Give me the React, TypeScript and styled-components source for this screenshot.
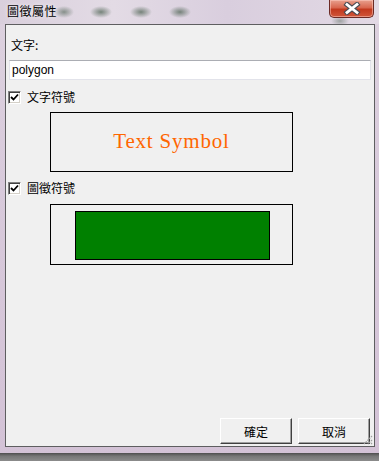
import React, { useState } from 'react';
import styled, { createGlobalStyle } from 'styled-components';

const GlobalStyle = createGlobalStyle`
  html, body {
    margin: 0;
    padding: 0;
    width: 379px;
    height: 461px;
    overflow: hidden;
    background: #6a6a6a;
  }
`;

const cjk = `"Noto Sans CJK TC", "Noto Sans CJK SC", "Liberation Sans", sans-serif`;

// Window frame
const Window = styled.div`
  width: 379px;
  height: 461px;
  display: flex;
  flex-direction: column;
  background: linear-gradient(180deg, #ddd2df 0%, #d8cadb 40%, #d3c2d6 100%);
  font-family: ${cjk};
  color: #000;
`;

const TitleBar = styled.div`
  height: 24px;
  flex: none;
  display: flex;
  justify-content: space-between;
  align-items: flex-start;
  padding-left: 7px;
  background:
    radial-gradient(ellipse 10px 6px at 64px 12px, rgba(60, 85, 65, 0.55), transparent),
    radial-gradient(ellipse 11px 6px at 101px 12px, rgba(60, 85, 65, 0.65), transparent),
    radial-gradient(ellipse 11px 6px at 141px 12px, rgba(60, 85, 65, 0.65), transparent),
    radial-gradient(ellipse 11px 6px at 180px 12px, rgba(60, 85, 65, 0.65), transparent),
    radial-gradient(ellipse 9px 5px at 340px 21px, rgba(60, 85, 65, 0.4), transparent),
    linear-gradient(90deg, #d9cfdc 0%, #e3dbe5 30%, #d9cede 60%, #e2d9e4 100%);
`;

const Title = styled.span`
  margin-top: 4px;
  font-size: 12px;
  line-height: 14px;
  letter-spacing: 0.5px;
  text-shadow: 0 0 4px rgba(255, 255, 255, 0.9);
`;

const CloseButton = styled.div`
  width: 45px;
  height: 18px;
  margin-right: 5px;
  box-sizing: border-box;
  display: flex;
  align-items: center;
  justify-content: center;
  border: 1px solid #6b2a25;
  border-top: none;
  border-radius: 0 0 5px 5px;
  background: linear-gradient(180deg, #e8a08e 0%, #d8674f 45%, #c2391e 55%, #d0563a 100%);
  box-shadow: inset 0 0 0 1px rgba(255, 210, 200, 0.5);
`;

const Body = styled.div`
  flex: 1;
  display: flex;
  padding: 0 4px 0 5px;
`;

const Client = styled.div`
  position: relative;
  flex: 1;
  display: flex;
  flex-direction: column;
  border: 1px solid #5e5e60;
  background: #f0f0f0;
  padding: 0 3px 2px 3px;
`;

const BottomFrame = styled.div`
  height: 6px;
  flex: none;
`;

const Shadow = styled.div`
  height: 8px;
  flex: none;
  background: linear-gradient(180deg, #4e4e4e 0%, #777 40%, #8c8c8c 100%);
`;

// Form parts
const FieldLabel = styled.div`
  margin-top: 13px;
  margin-left: 2px;
  font-size: 12px;
  line-height: 14px;
`;

const TextInput = styled.input`
  margin-top: 8px;
  height: 20px;
  box-sizing: border-box;
  width: 362px;
  border: 1px solid #e2e3ea;
  border-top-color: #abadb3;
  background: #fff;
  padding: 0 2px;
  font-family: "Liberation Sans", Arial, sans-serif;
  font-size: 12px;
  color: #000;
  outline: none;
`;

const CheckRow = styled.label<{ $top: number }>`
  margin-top: ${p => p.$top}px;
  display: flex;
  align-items: center;
  gap: 6px;
  height: 14px;
  margin-left: -1px;
  font-size: 12px;
  line-height: 14px;
  cursor: default;
`;

const CheckBox = styled.span`
  width: 13px;
  height: 13px;
  box-sizing: border-box;
  display: flex;
  align-items: center;
  justify-content: center;
  background: #fff;
  border: 1px solid;
  border-color: #808080 #ffffff #ffffff #808080;
  box-shadow: inset 1px 1px 0 #404040, inset -1px -1px 0 #d4d0c8;
`;

const PreviewBox = styled.div<{ $top: number; $height: number }>`
  margin-top: ${p => p.$top}px;
  margin-left: 41px;
  width: 243px;
  height: ${p => p.$height}px;
  box-sizing: border-box;
  border: 1px solid #000;
  display: flex;
  align-items: center;
  justify-content: center;
`;

const SymbolText = styled.span`
  font-family: "Liberation Serif", "Times New Roman", serif;
  font-size: 21px;
  letter-spacing: 0.8px;
  color: #ff6600;
  white-space: nowrap;
  margin-top: -1px;
`;

const IconRect = styled.div`
  width: 195px;
  height: 49px;
  box-sizing: border-box;
  border: 1px solid #000;
  background: #008000;
  margin-left: 1px;
  margin-top: 1px;
`;

const Spacer = styled.div`
  flex: 1;
`;

const ButtonRow = styled.div`
  display: flex;
  justify-content: flex-end;
  gap: 6px;
  padding-right: 1px;
`;

const Button = styled.button`
  width: 72px;
  height: 26px;
  box-sizing: border-box;
  background: #f0f0f0;
  border: 1px solid;
  border-color: #ffffff #404040 #404040 #ffffff;
  box-shadow: inset -1px -1px 0 #a0a0a0;
  font-family: ${cjk};
  font-size: 12px;
  color: #000;
  padding: 0;
`;

const Grip = styled.svg`
  position: absolute;
  right: 1px;
  bottom: 1px;
`;

const CheckMark = () => (
  <svg width="9" height="9" viewBox="0 0 9 9">
    <path d="M1 4 L3.5 6.5 L8 1.5" fill="none" stroke="#000" strokeWidth="1.8" />
  </svg>
);

const App: React.FC = () => {
  const [text, setText] = useState('polygon');

  return (
    <>
      <GlobalStyle />
      <Window>
        <TitleBar>
          <Title>圖徵屬性</Title>
          <CloseButton>
            <svg width="18" height="13" viewBox="0 0 18 13">
              <path d="M4 2.5 L14 10.5 M14 2.5 L4 10.5" stroke="#4a4a52" strokeWidth="5" strokeLinecap="square" />
              <path d="M4 2.5 L14 10.5 M14 2.5 L4 10.5" stroke="#fff" strokeWidth="2.8" strokeLinecap="square" />
            </svg>
          </CloseButton>
        </TitleBar>
        <Body>
          <Client>
            <FieldLabel>文字:</FieldLabel>
            <TextInput value={text} onChange={e => setText(e.target.value)} />

            <CheckRow $top={10}>
              <CheckBox><CheckMark /></CheckBox>
              文字符號
            </CheckRow>
            <PreviewBox $top={8} $height={60}>
              <SymbolText>Text Symbol</SymbolText>
            </PreviewBox>

            <CheckRow $top={9}>
              <CheckBox><CheckMark /></CheckBox>
              圖徵符號
            </CheckRow>
            <PreviewBox $top={9} $height={61}>
              <IconRect />
            </PreviewBox>

            <Spacer />
            <ButtonRow>
              <Button>確定</Button>
              <Button>取消</Button>
            </ButtonRow>
            <Grip width="11" height="11" viewBox="0 0 11 11">
              <path d="M10 2 L2 10 M10 6 L6 10 M10 9 L9 10" stroke="#a0a0a0" strokeWidth="1.2" strokeDasharray="1.5 1" />
            </Grip>
          </Client>
        </Body>
        <BottomFrame />
        <Shadow />
      </Window>
    </>
  );
};

export default App;
